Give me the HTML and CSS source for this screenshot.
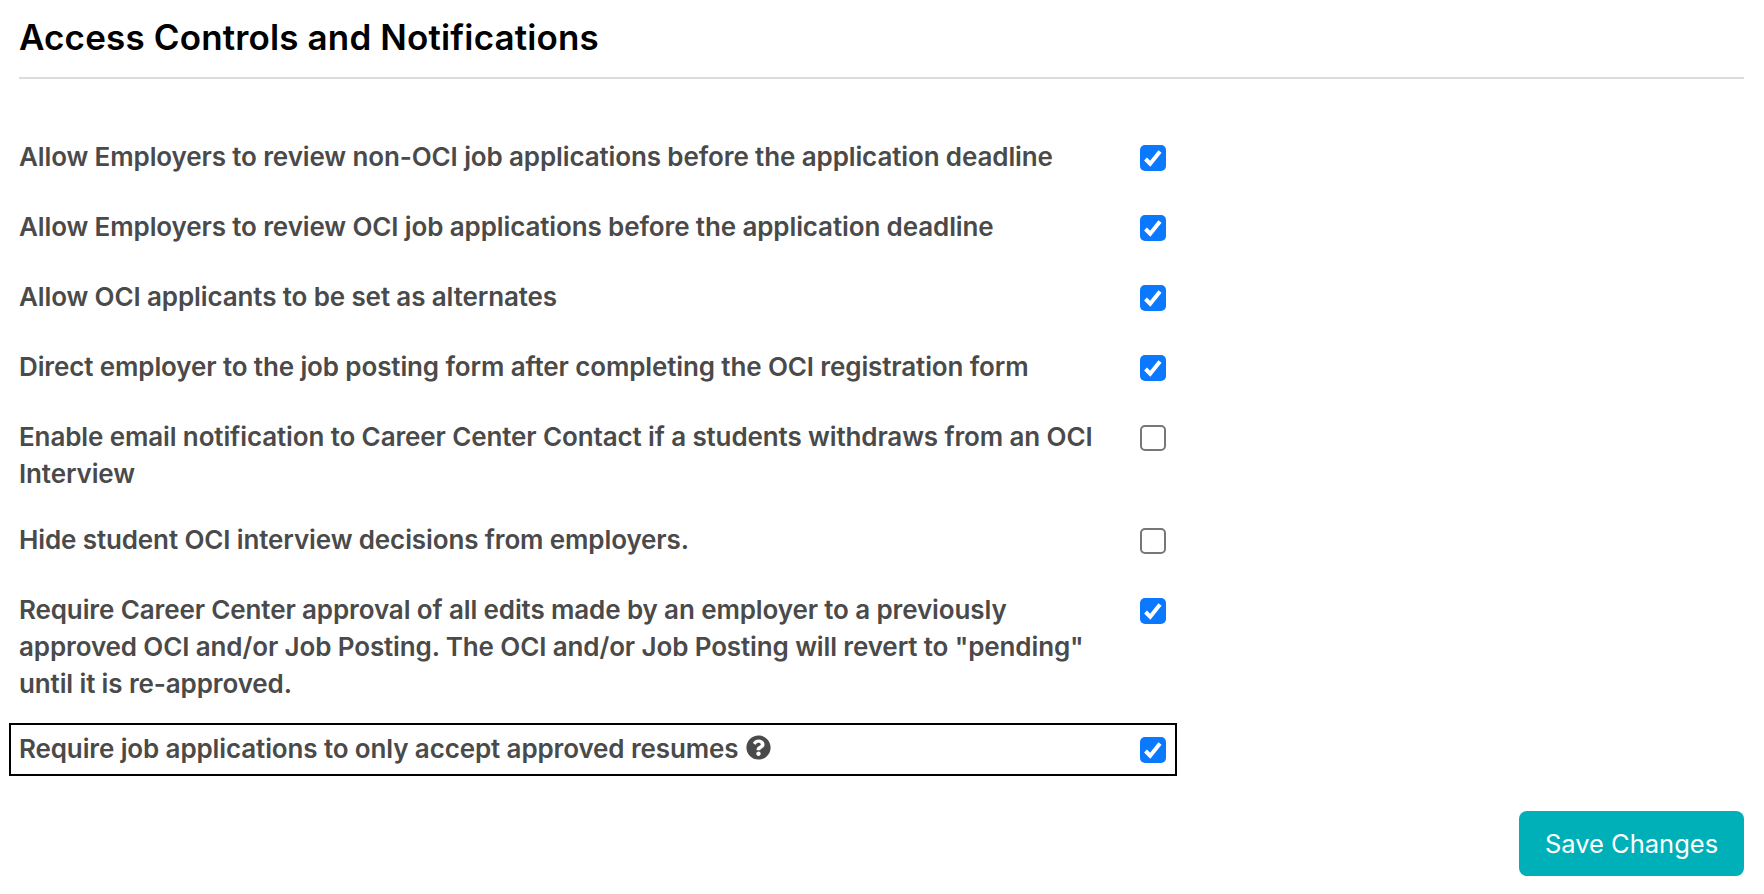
FILE: index.html
```html
<!DOCTYPE html>
<html lang="en">
<head>
    <meta charset="UTF-8">
    <title>Access Controls and Notifications</title>
    <link rel="stylesheet" href="styles.css">
</head>
<body>
    <div class="panel">
        <h2 class="panel-title">Access Controls and Notifications</h2>
        <form class="settings">
            <label class="setting">
                <span class="setting-text">Allow Employers to review non-OCI job applications before the application deadline</span>
                <input type="checkbox" checked>
            </label>
            <label class="setting">
                <span class="setting-text">Allow Employers to review OCI job applications before the application deadline</span>
                <input type="checkbox" checked>
            </label>
            <label class="setting">
                <span class="setting-text">Allow OCI applicants to be set as alternates</span>
                <input type="checkbox" checked>
            </label>
            <label class="setting">
                <span class="setting-text">Direct employer to the job posting form after completing the OCI registration form</span>
                <input type="checkbox" checked>
            </label>
            <label class="setting">
                <span class="setting-text">Enable email notification to Career Center Contact if a students withdraws from an OCI Interview</span>
                <input type="checkbox">
            </label>
            <label class="setting">
                <span class="setting-text">Hide student OCI interview decisions from employers.</span>
                <input type="checkbox">
            </label>
            <label class="setting">
                <span class="setting-text">Require Career Center approval of all edits made by an employer to a previously approved OCI and/or Job Posting. The OCI and/or Job Posting will revert to "pending" until it is re-approved.</span>
                <input type="checkbox" checked>
            </label>
            <label class="setting focused">
                <span class="setting-text">Require job applications to only accept approved resumes
                    <svg class="help-icon" viewBox="0 0 512 512"><path fill="currentColor" d="M504 256c0 136.997-111.043 248-248 248S8 392.997 8 256C8 119.083 119.043 8 256 8s248 111.083 248 248zM262.655 90c-54.497 0-89.255 22.957-116.549 63.758-3.536 5.286-2.353 12.415 2.715 16.258l34.699 26.31c5.205 3.947 12.621 3.008 16.665-2.122 17.864-22.658 30.113-35.797 57.303-35.797 20.429 0 45.698 13.148 45.698 32.958 0 14.976-12.363 22.667-32.534 33.976C247.128 238.528 216 254.941 216 296v4c0 6.627 5.373 12 12 12h56c6.627 0 12-5.373 12-12v-1.333c0-28.462 83.186-29.647 83.186-106.667 0-58.002-60.165-102-116.531-102zM256 338c-25.365 0-46 20.635-46 46 0 25.364 20.635 46 46 46s46-20.636 46-46c0-25.365-20.635-46-46-46z"/></svg>
                </span>
                <input type="checkbox" checked>
            </label>
            <div class="actions">
                <button type="button" class="save-button">Save Changes</button>
            </div>
        </form>
    </div>
</body>
</html>
```

FILE: styles.css
```css
body {
    font-family: Inter, "Noto Sans", sans-serif;
    margin: 0;
    padding: 0;
    background-color: #ffffff;
}
.panel {
    padding: 10px 20px 0 19px;
}
.panel-title {
    font-size: 35px;
    line-height: 54px;
    font-weight: 600;
    color: #000000;
    margin: 0;
    padding-bottom: 13px;
    border-bottom: 2px solid #dcdcdc;
    letter-spacing: 0.15px;
}
.settings {
    padding-top: 52px;
    display: flex;
    flex-direction: column;
    gap: 17px;
}
.setting {
    width: 1168px;
    min-height: 53px;
    margin-left: -10px;
    padding: 7px 11px 5px 10px;
    box-sizing: border-box;
    display: flex;
    justify-content: space-between;
    align-items: flex-start;
    font-size: 26px;
    line-height: 37px;
    font-weight: 600;
    letter-spacing: -0.12px;
    color: #4a4a4a;
}
.setting-text {
    width: 1100px;
}
.setting input {
    appearance: none;
    flex-shrink: 0;
    width: 26px;
    height: 26px;
    margin: 7px 0 0;
    border: 2px solid #777777;
    border-radius: 5px;
    background: #ffffff;
}
.setting input:checked {
    border: none;
    background: #0a78ff url("data:image/svg+xml,%3Csvg xmlns='http://www.w3.org/2000/svg' viewBox='0 0 26 26'%3E%3Cpath d='M5.5 14l4.7 4.7L20 6.5' fill='none' stroke='white' stroke-width='4'/%3E%3C/svg%3E");
}
.focused {
    margin-top: -1px;
    outline: 2px solid #000000;
    outline-offset: -2px;
}
.help-icon {
    width: 25px;
    height: 25px;
    vertical-align: -2px;
    margin-left: 1px;
}
.actions {
    display: flex;
    justify-content: flex-end;
    margin-top: 18px;
}
.save-button {
    width: 225px;
    height: 65px;
    background: #00b0b9;
    color: #ffffff;
    border: none;
    border-radius: 8px;
    font-family: Inter, "Noto Sans", sans-serif;
    font-size: 25.5px;
    font-weight: 400;
}
```
